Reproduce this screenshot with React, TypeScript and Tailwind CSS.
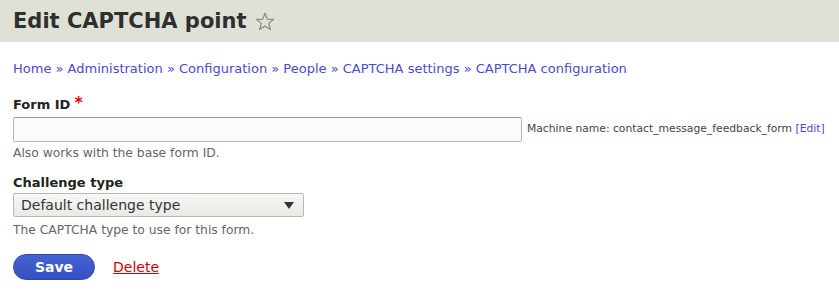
export default function App() {
  return (
    <div className="w-[839px] h-[302px] bg-white text-[#333] font-['DejaVu_Sans',sans-serif] overflow-hidden">
      <div className="h-[42px] bg-[#dfe0d6] flex items-center pl-[13px]">
        <h1 className="text-[21px] font-bold leading-none text-[#2f2f2f]">Edit CAPTCHA point</h1>
        <svg className="ml-[8px] mt-[1px]" width="20" height="19" viewBox="0 0 20 19">
          <path
            d="M10 1.2 L12.3 7.1 L18.6 7.4 L13.7 11.4 L15.4 17.6 L10 14.1 L4.6 17.6 L6.3 11.4 L1.4 7.4 L7.7 7.1 Z"
            fill="none"
            stroke="#8a8a80"
            strokeWidth="1.2"
            strokeLinejoin="round"
          />
        </svg>
      </div>

      <div className="px-[13px]">
        <nav className="mt-[19px] text-[13px] leading-[16px] text-[#4a4ad0]">
          <a>Home</a> » <a>Administration</a> » <a>Configuration</a> » <a>People</a> » <a>CAPTCHA settings</a> »{" "}
          <a>CAPTCHA configuration</a>
        </nav>

        <div className="mt-[20px]">
          <label className="flex items-start text-[13px] font-bold leading-[16px] text-[#222]">
            Form ID
            <span className="ml-[4px] text-[16px] leading-[12px] text-[#e00]">*</span>
          </label>
          <div className="mt-[4px] flex items-center whitespace-nowrap">
            <input className="flex-none w-[509px] h-[25px] border border-[#b8b8b8] border-t-[#999] rounded-[2px] bg-[#fbfbfa] outline-none" />
            <span className="ml-[5px] text-[10.75px] text-[#444]">
              Machine name: contact_message_feedback_form <span className="text-[#4a4ad0]">[Edit]</span>
            </span>
          </div>
          <div className="mt-[4px] text-[12.3px] leading-[15px] text-[#666]">Also works with the base form ID.</div>
        </div>

        <div className="mt-[14px]">
          <label className="block text-[13px] font-bold leading-[16px] text-[#222]">Challenge type</label>
          <div className="mt-[2px] w-[291px] h-[24px] border border-[#b8b8b8] rounded-[2px] bg-gradient-to-b from-[#f8f8f6] to-[#e8eae3] flex items-center justify-between pl-[7px] pr-[9px]">
            <span className="text-[14px] text-[#333]">Default challenge type</span>
            <svg width="10" height="7" viewBox="0 0 10 7">
              <path d="M0 0 H10 L5 7 Z" fill="#333" />
            </svg>
          </div>
          <div className="mt-[6px] text-[12.3px] leading-[15px] text-[#666]">The CAPTCHA type to use for this form.</div>
        </div>

        <div className="mt-[16px] flex items-center">
          <button className="w-[82px] h-[26px] rounded-full bg-gradient-to-b from-[#4563d0] to-[#3550c2] border border-[#2f48b0] text-white text-[14px] font-bold">
            Save
          </button>
          <a className="ml-[18px] text-[14px] text-[#d00000] underline">Delete</a>
        </div>
      </div>
    </div>
  );
}
